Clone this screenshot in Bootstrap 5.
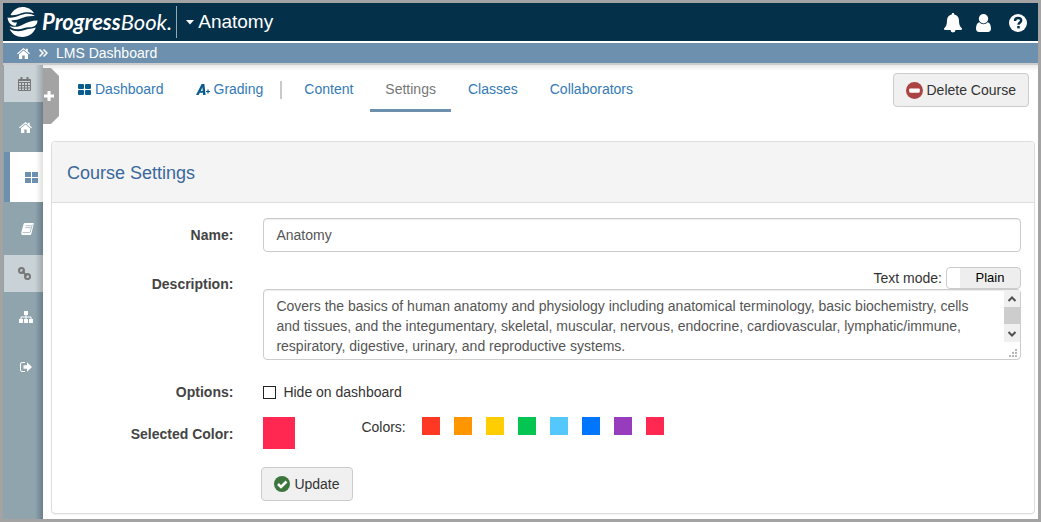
<!DOCTYPE html>
<html lang="en">
<head>
<meta charset="utf-8">
<meta name="viewport" content="width=device-width, initial-scale=1">
<title>Anatomy - Course Settings</title>
<link href="https://cdn.jsdelivr.net/npm/bootstrap@5.3.0/dist/css/bootstrap.min.css" rel="stylesheet">
<style>
:root { --steel: #6c90ae; --navy: #05304a; --frame: #a3a3a3; --link: #337ab7; }
body { font: 14px/20px "Liberation Sans", Arial, sans-serif; color: #333; background: #fff; }
a { text-decoration: none; }
svg { display: block; flex: none; }
.app { min-height: 100vh; border: 3px solid var(--frame); }
.topbar { height: 38px; background: var(--navy); padding: 0 11px 0 4px; }
.brand { color: #fff; }
.brand-name { font: italic 700 22px/34px Lato, sans-serif; margin-left: 4px; }
.brand-name span { font-weight: 400; }
.course-menu { border: 0; border-left: 1px solid #9aa7b0; background: none; color: #fff; font-size: 19px; height: 32px; padding: 0 0 0 9px; margin-left: 4px; }
.account { gap: 14px; padding-top: 2px; }
.crumbs { height: 24px; border-top: 2px solid #fff; border-bottom: 2px solid #c9cbcc; background: var(--steel); padding: 0 14px; font-size: 14px; }
.crumbs a { color: #fff; }
.side { width: 40px; background: linear-gradient(to right, transparent 32px, rgba(70,90,105,.5)), #90a4ae; }
.side a { height: 50px; color: #fff; padding-left: 5px; }
.side a.muted { height: 37px; color: #777; background: linear-gradient(to right, transparent 31px, rgba(120,130,135,.5)), #c9d2d7; margin-left: 1px; padding-left: 1px; }
.side a.current { color: var(--steel); background: linear-gradient(to right, transparent 26px, rgba(180,180,180,.4)), #fff; border-left: 6px solid var(--steel); padding-left: 10px; margin-left: 1px; }
.side a.roomy { height: 53px; padding-left: 8px; }
.expander { left: 0; top: 3px; width: 16px; height: 56px; border: 0; padding: 0 0 0 1px; background: var(--frame); color: #fff; clip-path: polygon(0 0, 8px 0, 16px 8px, 16px 48px, 8px 56px, 0 56px); }
.content { background: linear-gradient(#e9e9e9, #fff 6px); padding: 0 3px 5px 8px; min-width: 0; }
.tabs { padding: 8px 6px 0 12px; min-height: 76px; }
.tabs .nav { gap: 2px; }
.tabs .nav-link { color: var(--link); padding: 6px 15px 10px; border-bottom: 3px solid transparent; gap: 4px; }
.tabs .nav-link.active { color: #777; border-color: var(--steel); }
.tab-split { width: 2px; height: 18px; background: #c9c9c9; margin: 8px 5px 0 0; }
.btn-plain { --bs-btn-font-size: 14px; --bs-btn-line-height: 20px; --bs-btn-padding-x: 12px; --bs-btn-padding-y: 6px; --bs-btn-bg: #f0f0f0; --bs-btn-border-color: #ccc; --bs-btn-color: #333; --bs-btn-border-radius: 4px; --bs-btn-hover-bg: #e6e6e6; --bs-btn-hover-border-color: #adadad; }
.panel { border-color: #ddd; border-radius: 4px; box-shadow: 0 1px 1px rgba(0,0,0,.05); }
.panel .card-header { background: #f4f4f4; border-color: #ddd; padding: 20px 15px 18px; }
.panel h1 { font-size: 18px; line-height: 22px; color: #3a689b; font-weight: 400; }
.panel .card-body { padding: 15px 0 12px; }
.field-row { display: grid; grid-template-columns: 20% 1fr; margin-bottom: 15px; }
.field-title { font-weight: 700; color: #444; text-align: right; padding: 7px 15px 0; }
.field-area { padding: 0 13px 0 15px; min-width: 0; }
.field-area .form-control { font-size: 14px; line-height: 20px; padding: 6px 12px; color: #555; border-color: #ccc; border-radius: 4px; box-shadow: inset 0 1px 1px rgba(0,0,0,.075); }
.field-area textarea.form-control { display: block; height: 71px; min-height: 0; padding-right: 28px; resize: none; overflow: hidden; }
.scroller { right: 1px; top: 1px; }
.mode { width: 75px; height: 22px; border: 1px solid #ccc; border-radius: 4px; color: #000; padding: 0 0 0 13px; font-size: 13px; line-height: 20px; background: linear-gradient(to right, #fff 13px, #eee 13px); }
.tick { appearance: none; width: 13px; height: 13px; border: 1px solid #222; background: #fff; margin: 0 7px 0 0; }
.tick:checked { background: #222; box-shadow: inset 0 0 0 2px #fff; }
.picked { width: 32px; height: 32px; margin-right: 66px; }
.swatches { gap: 14px; }
.swatch { width: 18px; height: 18px; border: 0; padding: 0; }
.form-actions { padding: 3px 13px 0; }
</style>
</head>
<body>
<div class="app d-flex flex-column">
  <header class="topbar d-flex align-items-center">
    <a class="brand d-flex align-items-center" href="#" aria-label="ProgressBook">
      <svg width="31" height="30" viewBox="0 0 31 30" fill="#fff">
        <path d="M3.500 8C6 3 10.500 0 15.500 0C20.500 0 24.500 2.200 27 6.200C21.500 4.600 17.500 5.200 13.500 6.500C10 7.700 7 8.600 3.500 8Z"/>
        <path d="M.500 10.500C5 11.200 9 9.800 13 8.200C18 6.300 23.500 5.800 28 9C22 8.800 18.500 9.700 15 11C11 12.600 7.500 13.500 4.500 13.200C4.500 14.800 7 15.800 10 15.500L8.800 18.800C4 18.800 1 15.500.500 10.500Z"/>
        <path d="M30.500 13.500C30.500 18 27 20.500 22.500 20.300C18 20 15 22.600 10 22.300C6.500 22 4 20.800 2.500 19C7.500 20.500 12 20 16 17.500C20 15.200 24.500 13.500 30.500 13.500Z"/>
        <path d="M2.500 22C8 25 14 24.600 18.500 22.800C22 21.500 25 21.800 28.800 20.500C26.500 26.500 21.500 30 15.500 30C9.500 30 5 27 2.500 22Z"/>
      </svg>
      <span class="brand-name">Progress<span>Book.</span></span>
    </a>
    <button class="course-menu d-flex align-items-center" type="button">
      <svg class="me-1" width="8" height="5" fill="#fff"><path d="M0 0h8L4 4.500Z"/></svg>Anatomy
    </button>
    <nav class="account ms-auto d-flex align-items-center" aria-label="Account">
      <a href="#" aria-label="Notifications"><svg width="18" height="20" viewBox="0 0 18 20" fill="#fff"><path d="M9 0c.8 0 1.300.500 1.200 1.400C13.200 2 15 4.200 15 7.500c0 4 .8 6 3 8c0 .8-.4 1.500-1 1.500h-5.500a2.500 2.500 0 0 1-5 0H1c-.6 0-1-.7-1-1.500C2.200 13.500 3 11.500 3 7.500c0-3.300 1.800-5.500 4.800-6.100C7.700.5 8.200 0 9 0Z"/></svg></a>
      <a href="#" aria-label="Profile"><svg width="15" height="18" viewBox="0 0 15 18" fill="#fff"><circle cx="7.500" cy="4.700" r="4.700"/><path d="M3.300 8.300C4.400 9.600 5.900 10.300 7.500 10.300s3.100-.7 4.200-2C14 8.800 15 11.500 15 14.800c0 2-1.200 3.200-3 3.200H3c-1.800 0-3-1.200-3-3.200C0 11.500 1 8.800 3.300 8.300Z"/></svg></a>
      <a class="ms-1" href="#" aria-label="Help"><svg width="18" height="18" viewBox="0 0 18 18"><circle cx="9" cy="9" r="9" fill="#fff"/><path d="M6 7c0-2 1.300-3 3-3s3.200 1 3.200 2.600c0 1.900-2.700 2-2.700 4.200" fill="none" stroke="#05304a" stroke-width="2.400"/><path d="M8.200 12h2.500v2.400H8.200z" fill="#05304a"/></svg></a>
    </nav>
  </header>
  <nav class="crumbs d-flex align-items-center" aria-label="Breadcrumb">
    <a href="#" aria-label="Home"><svg width="13" height="11" viewBox="0 0 13 11" fill="currentColor"><path d="M6.500 0L9 2V.7h1.800v2.900L13 5.400l-.8.9L6.500 1.600L.8 6.300L0 5.400Z"/><path d="M6.500 2.600L11 6.300V11H7.700V7.500H5.300V11H2V6.300Z"/></svg></a>
    <svg class="mx-2" width="10" height="8" viewBox="0 0 10 8" fill="none" stroke="#fff" stroke-width="1.500"><path d="M1.500.5L5 4L1.500 7.500M5.500.5L9 4L5.500 7.500"/></svg>
    <a href="#">LMS Dashboard</a>
  </nav>
  <div class="d-flex flex-grow-1">
    <nav class="side flex-shrink-0 d-flex flex-column" aria-label="Sections">
      <a href="#" class="muted d-flex align-items-center justify-content-center" aria-label="Calendar"><svg width="13" height="14" viewBox="0 0 13 14" fill="none" stroke="currentColor"><path d="M.5 2.500h12v11H.5zM.5 5.500h12M3.500 5.500v8M6.500 5.500v8M9.500 5.500v8M.5 8.500h12M.5 11h12"/><path d="M3.500 0v4M9.500 0v4" stroke-width="2"/><path d="M1 3.500h11"/></svg></a>
      <a href="#" class="d-flex align-items-center justify-content-center" aria-label="Home"><svg width="13" height="11" viewBox="0 0 13 11" fill="currentColor"><path d="M6.500 0L9 2V.7h1.800v2.900L13 5.400l-.8.9L6.500 1.600L.8 6.300L0 5.400Z"/><path d="M6.500 2.600L11 6.300V11H7.700V7.500H5.300V11H2V6.300Z"/></svg></a>
      <a href="#" class="current d-flex align-items-center justify-content-center" aria-label="Dashboard"><svg width="13" height="11" fill="currentColor"><path d="M0 0h6v5H0zM7 0h6v5H7zM0 6h6v5H0zM7 6h6v5H7z"/></svg></a>
      <a href="#" class="roomy d-flex align-items-center justify-content-center" aria-label="Gradebook"><svg width="13" height="12" viewBox="0 0 13 12"><path d="M4 0h8.300q.7 0 .5.800L10.300 11q-.2 1-1.200 1H1.500Q0 12 .2 10L2.500 1.200Q2.800 0 4 0Z" fill="#fff"/><path d="M4.700 2.700h5.500M4.200 4.700h5.500M1.500 9.600h6.800Q9 9.600 9.200 9L11.300 1.500" fill="none" stroke="#90a4ae" stroke-width=".7"/></svg></a>
      <a href="#" class="muted d-flex align-items-center justify-content-center" aria-label="Links"><svg width="13" height="13" viewBox="0 0 13 13" fill="none" stroke="currentColor" stroke-width="2"><circle cx="3.500" cy="3.500" r="2.500"/><circle cx="9.500" cy="9.500" r="2.500"/><path d="M4 4l5 5" stroke-width="1.800"/></svg></a>
      <a href="#" class="d-flex align-items-center justify-content-center" aria-label="Organization"><svg width="14" height="12" fill="currentColor"><path d="M5 0h4v4H5zM0 8h4v4H0zM5 8h4v4H5zM10 8h4v4h-4z"/><path d="M7 4v4M2 8V6h10v2" fill="none" stroke="currentColor"/></svg></a>
      <a href="#" class="d-flex align-items-center justify-content-center" aria-label="Sign out"><svg width="12" height="10" viewBox="0 0 12 10"><path d="M5 .5H2Q.5.5.5 2v6Q.5 9.500 2 9.500h3" fill="none" stroke="#fff"/><path d="M3.500 3.300H7V.3L12 5L7 9.700v-3H3.500Z" fill="#fff"/></svg></a>
    </nav>
    <main class="content flex-grow-1 position-relative">
      <button class="expander position-absolute d-flex align-items-center" type="button" aria-label="Expand sidebar"><svg width="10" height="10" fill="currentColor"><path d="M3.500 0h3v3.500H10v3H6.500V10h-3V6.500H0v-3h3.500z"/></svg></button>
      <div class="tabs d-flex align-items-start">
        <ul class="nav">
          <li><a class="nav-link d-flex align-items-center" href="#"><svg width="13" height="11" fill="#0a5c8f"><rect width="6" height="5" rx="1"/><rect x="7" width="6" height="5" rx="1"/><rect y="6" width="6" height="5" rx="1"/><rect x="7" y="6" width="6" height="5" rx="1"/></svg>Dashboard</a></li>
          <li><a class="nav-link d-flex align-items-center" href="#"><svg width="14" height="11" viewBox="0 0 14 11"><path d="M0 11L5.600 0H8.400L9.600 11H7.100L6.900 8.800H3.800L2.700 11ZM4.800 6.900H6.700L6.400 3.300Z" fill="#0a5c8f" fill-rule="evenodd"/><path d="M12 5.500v4M10 7.500h4" stroke="#0a5c8f" stroke-width="1.200"/></svg>Grading</a></li>
          <li class="tab-split" aria-hidden="true"></li>
          <li><a class="nav-link" href="#">Content</a></li>
          <li><a class="nav-link active" href="#" aria-current="page">Settings</a></li>
          <li><a class="nav-link" href="#">Classes</a></li>
          <li><a class="nav-link" href="#">Collaborators</a></li>
        </ul>
        <button class="btn btn-plain ms-auto d-flex align-items-center gap-1" type="button"><svg width="17" height="17" viewBox="0 0 16 16"><circle cx="8" cy="8" r="8" fill="#a94442"/><rect x="3" y="6" width="10" height="4" rx="1" fill="#fff"/></svg>Delete Course</button>
      </div>
      <section class="card panel">
        <div class="card-header"><h1 class="m-0">Course Settings</h1></div>
        <form class="card-body">
          <div class="field-row">
            <label class="field-title" for="name">Name:</label>
            <div class="field-area"><input class="form-control" id="name" type="text" value="Anatomy"></div>
          </div>
          <div class="field-row">
            <label class="field-title" for="description">Description:</label>
            <div class="field-area">
              <div class="d-flex justify-content-end align-items-center">
                <label class="me-1" for="mode">Text mode:</label>
                <button class="mode text-center" id="mode" type="button">Plain</button>
              </div>
              <div class="position-relative">
                <textarea class="form-control" id="description">Covers the basics of human anatomy and physiology including anatomical terminology, basic biochemistry, cells and tissues, and the integumentary, skeletal, muscular, nervous, endocrine, cardiovascular, lymphatic/immune, respiratory, digestive, urinary, and reproductive systems.</textarea>
                <svg class="scroller position-absolute" width="16" height="69" aria-hidden="true"><path fill="#f0f0f0" d="M0 0h16v52H0z"/><path fill="#cdcdcd" d="M0 17h16v17H0z"/><path d="M4.500 11L8 7.500L11.500 11M4.500 42L8 45.500L11.500 42" fill="none" stroke="#505050" stroke-width="2"/><path fill="#b8b8b8" d="M11 59h2v2h-2zM8 62h2v2H8zM11 62h2v2h-2zM5 65h2v2H5zM8 65h2v2H8zM11 65h2v2h-2z"/></svg>
              </div>
            </div>
          </div>
          <div class="field-row">
            <div class="field-title">Options:</div>
            <div class="field-area d-flex align-items-end"><label class="d-flex align-items-center" for="hide"><input class="tick" id="hide" type="checkbox">Hide on dashboard</label></div>
          </div>
          <div class="field-row">
            <div class="field-title">Selected Color:</div>
            <div class="field-area d-flex align-items-start">
              <div class="picked" style="background:#ff2851"></div>
              <div class="me-3">Colors:</div>
              <div class="swatches d-flex">
                <button class="swatch" type="button" aria-label="Red" style="background:#ff3824"></button>
                <button class="swatch" type="button" aria-label="Orange" style="background:#ff9600"></button>
                <button class="swatch" type="button" aria-label="Yellow" style="background:#ffcd00"></button>
                <button class="swatch" type="button" aria-label="Green" style="background:#04c552"></button>
                <button class="swatch" type="button" aria-label="Light blue" style="background:#54c7fc"></button>
                <button class="swatch" type="button" aria-label="Blue" style="background:#0076ff"></button>
                <button class="swatch" type="button" aria-label="Purple" style="background:#963cbd"></button>
                <button class="swatch" type="button" aria-label="Pink" style="background:#ff2851"></button>
              </div>
            </div>
          </div>
          <div class="field-row mb-0">
            <div></div>
            <div class="form-actions"><button class="btn btn-plain d-flex align-items-center gap-1" type="submit"><svg width="16" height="16"><circle cx="8" cy="8" r="8" fill="#3c763d"/><path d="M4 8l3 3l5.500-5.500" fill="none" stroke="#fff" stroke-width="2.600"/></svg>Update</button></div>
          </div>
        </form>
      </section>
    </main>
  </div>
</div>
<script src="https://cdn.jsdelivr.net/npm/bootstrap@5.3.0/dist/js/bootstrap.bundle.min.js"></script>
</body>
</html>
